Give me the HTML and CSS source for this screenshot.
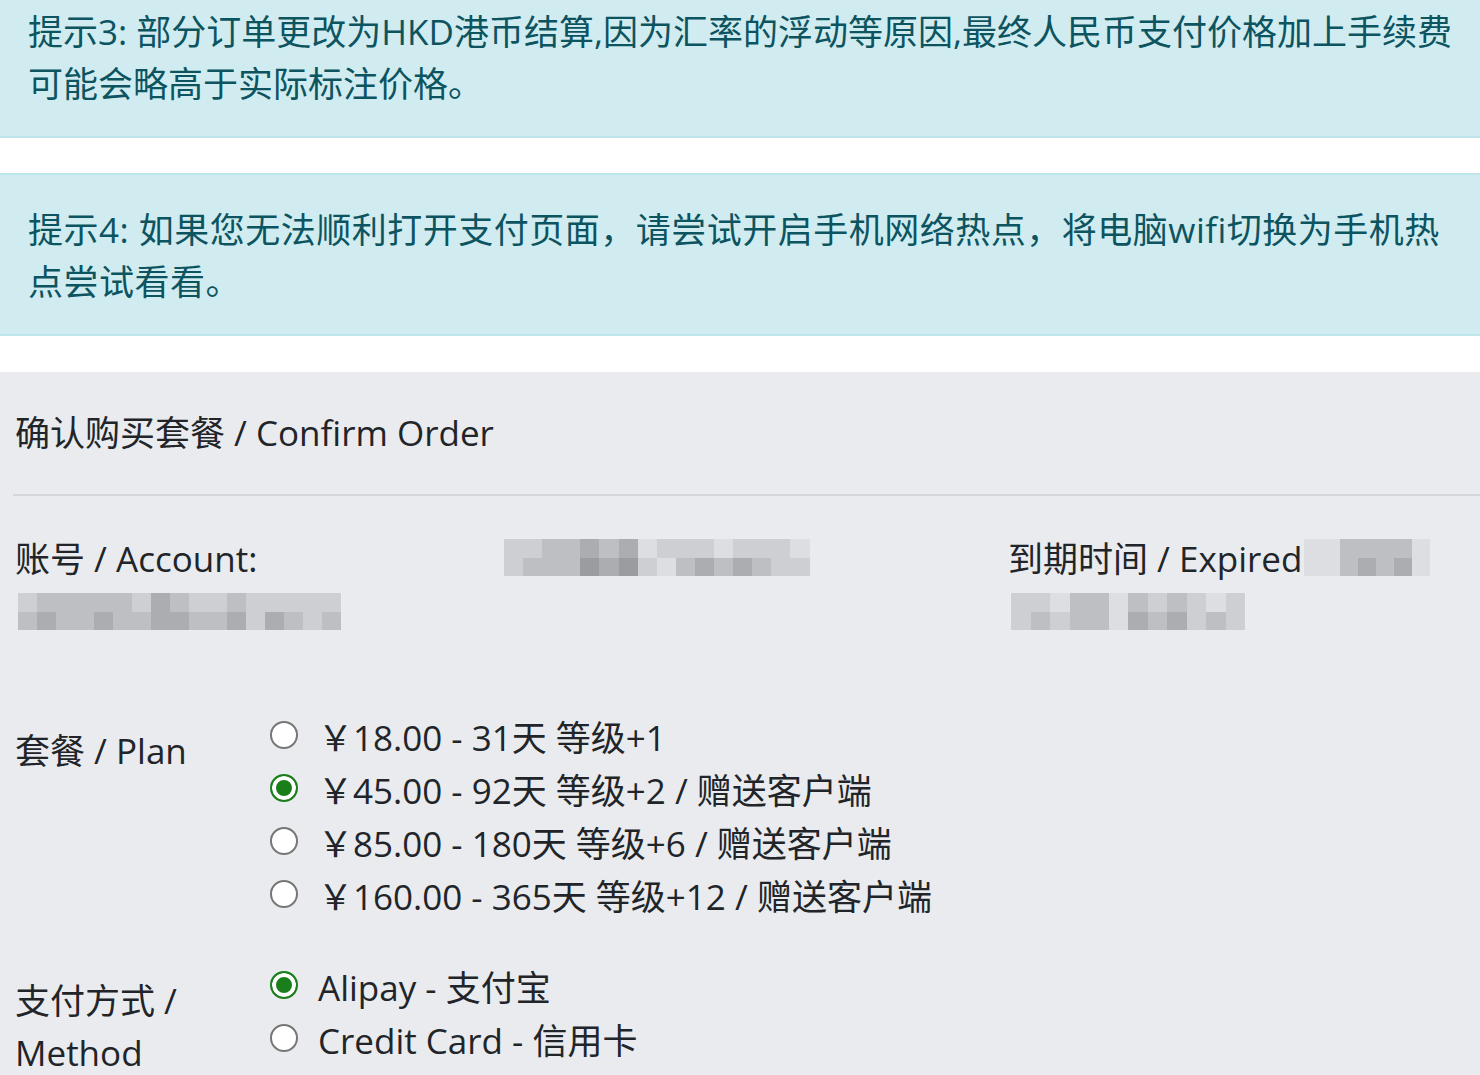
FILE: index.html
```html
<!DOCTYPE html>
<html lang="zh-CN">
<head>
<meta charset="utf-8">
<title>确认购买套餐</title>
<link rel="stylesheet" href="styles.css">
</head>
<body>
<div class="alert alert-first">提示3: 部分订单更改为HKD港币结算,因为汇率的浮动等原因,最终人民币支付价格加上手续费可能会略高于实际标注价格。</div>
<div class="alert alert-wide">提示4: 如果您无法顺利打开支付页面，请尝试开启手机网络热点，将电脑wifi切换为手机热点尝试看看。</div>

<section class="card">
  <h2 class="card-header">确认购买套餐 / Confirm Order</h2>
  <div class="card-body">
    <div class="info-row">
      <div class="info-col">
        <div>账号 / Account:</div>
        <div class="mosaic mosaic-block cols-17">
          <i class="c2"></i><i class="c3"></i><i class="c3"></i><i class="c3"></i><i class="c3"></i><i class="c3"></i><i class="c2"></i><i class="c4"></i><i class="c3"></i><i class="c2"></i><i class="c2"></i><i class="c3"></i><i class="c2"></i><i class="c2"></i><i class="c2"></i><i class="c2"></i><i class="c2"></i>
          <i class="c3"></i><i class="c4"></i><i class="c3"></i><i class="c3"></i><i class="c4"></i><i class="c3"></i><i class="c3"></i><i class="c4"></i><i class="c4"></i><i class="c3"></i><i class="c3"></i><i class="c4"></i><i class="c2"></i><i class="c4"></i><i class="c3"></i><i class="c2"></i><i class="c3"></i>
        </div>
      </div>
      <div class="info-col">
        <div class="mosaic mosaic-inline cols-16">
          <i class="c2"></i><i class="c2"></i><i class="c3"></i><i class="c3"></i><i class="c4"></i><i class="c3"></i><i class="c4"></i><i class="c1"></i><i class="c2"></i><i class="c2"></i><i class="c2"></i><i class="c1"></i><i class="c2"></i><i class="c2"></i><i class="c2"></i><i class="c1"></i>
          <i class="c2"></i><i class="c3"></i><i class="c3"></i><i class="c3"></i><i class="c5"></i><i class="c4"></i><i class="c5"></i><i class="c2"></i><i class="c1"></i><i class="c3"></i><i class="c4"></i><i class="c3"></i><i class="c4"></i><i class="c3"></i><i class="c2"></i><i class="c2"></i>
        </div>
      </div>
      <div class="info-col">
        <div>到期时间 / Expired:<span class="mosaic mosaic-inline mosaic-tail cols-7"><i class="c1"></i><i class="c1"></i><i class="c3"></i><i class="c3"></i><i class="c3"></i><i class="c3"></i><i class="c1"></i><i class="c1"></i><i class="c1"></i><i class="c3"></i><i class="c4"></i><i class="c3"></i><i class="c4"></i><i class="c1"></i></span></div>
        <div class="mosaic mosaic-block cols-12">
          <i class="c2"></i><i class="c2"></i><i class="c1"></i><i class="c3"></i><i class="c3"></i><i class="c1"></i><i class="c3"></i><i class="c2"></i><i class="c3"></i><i class="c2"></i><i class="c1"></i><i class="c2"></i>
          <i class="c2"></i><i class="c3"></i><i class="c2"></i><i class="c3"></i><i class="c3"></i><i class="c1"></i><i class="c4"></i><i class="c3"></i><i class="c4"></i><i class="c2"></i><i class="c3"></i><i class="c2"></i>
        </div>
      </div>
    </div>

    <div class="form-row form-row-plan">
      <div class="form-label">套餐 / Plan</div>
      <div class="options">
        <label class="option"><input type="radio" name="plan" class="radio"><span>￥18.00 - 31天 等级+1</span></label>
        <label class="option"><input type="radio" name="plan" class="radio" checked><span>￥45.00 - 92天 等级+2 / 赠送客户端</span></label>
        <label class="option"><input type="radio" name="plan" class="radio"><span>￥85.00 - 180天 等级+6 / 赠送客户端</span></label>
        <label class="option"><input type="radio" name="plan" class="radio"><span>￥160.00 - 365天 等级+12 / 赠送客户端</span></label>
      </div>
    </div>

    <div class="form-row">
      <div class="form-label">支付方式 / Method</div>
      <div class="options">
        <label class="option"><input type="radio" name="method" class="radio" checked><span>Alipay - 支付宝</span></label>
        <label class="option"><input type="radio" name="method" class="radio"><span>Credit Card - 信用卡</span></label>
      </div>
    </div>
  </div>
</section>
</body>
</html>
```
FILE: styles.css
```css
html, body {
  margin: 0;
  padding: 0;
}

body {
  font-family: "Open Sans", "Noto Sans CJK SC", sans-serif;
  font-size: 35px;
  line-height: 52px;
  color: #212529;
  background: #ffffff;
}

.alert {
  background: #d1ecf1;
  color: #0c5460;
  border-top: 2px solid #bee5eb;
  border-bottom: 2px solid #bee5eb;
  padding: 29px 22px 26px 28px;
  margin-bottom: 36px;
}

.alert-first {
  border-top: none;
  padding-top: 6px;
  margin-bottom: 35px;
}

.alert-wide {
  letter-spacing: 0.5px;
}

.card {
  background: #e9ebee;
  padding-bottom: 40px;
}

.card-header {
  margin: 0 0 0 13px;
  padding: 35px 0 35px 2px;
  font-size: 35px;
  font-weight: 400;
  line-height: 52px;
  border-bottom: 2px solid #d4d6d9;
}

.card-body {
  padding: 37px 0 0 15px;
}

.info-row {
  display: grid;
  grid-template-columns: 489px 504px 1fr;
  margin-bottom: 73px;
}

.mosaic {
  display: grid;
  grid-auto-rows: 18.5px;
}

.mosaic i {
  display: block;
}

.mosaic-block {
  width: max-content;
  margin: 8px 0 8px 3px;
}

.mosaic-inline {
  display: inline-grid;
  vertical-align: top;
  margin-top: 6px;
}

.mosaic-tail {
  margin-left: -8px;
}

.cols-7 { grid-template-columns: repeat(7, 18px); }
.cols-12 { grid-template-columns: repeat(12, 19.5px); }
.cols-16 { grid-template-columns: repeat(16, 19.1px); }
.cols-17 { grid-template-columns: repeat(17, 19px); }

.c1 { background: #dcdee1; }
.c2 { background: #cdcfd2; }
.c3 { background: #bdbfc2; }
.c4 { background: #abadb1; }
.c5 { background: #9a9ca0; }

.form-row {
  display: grid;
  grid-template-columns: 255px 1fr;
}

.form-row-plan {
  margin-bottom: 38px;
}

.form-label {
  padding-top: 14px;
  padding-right: 60px;
}

.options {
  display: flex;
  flex-direction: column;
}

.option {
  display: flex;
  align-items: center;
  gap: 20px;
  line-height: 53px;
}

.radio {
  appearance: none;
  -webkit-appearance: none;
  box-sizing: border-box;
  width: 28px;
  height: 28px;
  margin: 0 0 6px 0;
  border: 2px solid #767676;
  border-radius: 50%;
  background: #ffffff;
  flex: none;
}

.radio:checked {
  border-color: #1a7f1a;
  background: #1a7f1a;
  box-shadow: inset 0 0 0 4px #ffffff;
}
```
